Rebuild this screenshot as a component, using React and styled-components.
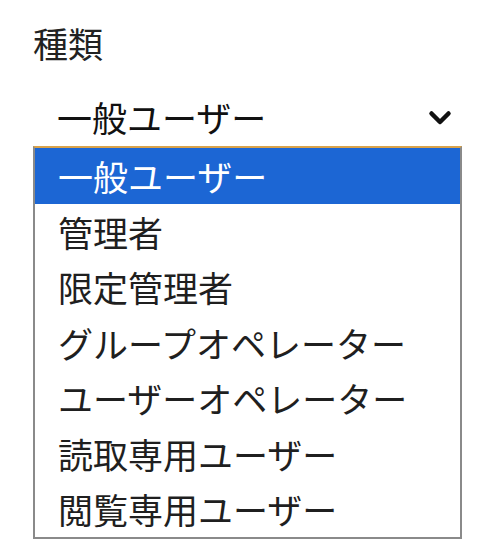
import React from 'react';
import styled, { createGlobalStyle } from 'styled-components';

const GlobalStyle = createGlobalStyle`
  html, body {
    margin: 0;
    padding: 0;
    background: #ffffff;
  }
  body {
    font-family: "Noto Sans CJK JP", "Noto Sans", sans-serif;
    color: #1f1f1f;
  }
`;

const options = [
  '一般ユーザー',
  '管理者',
  '限定管理者',
  'グループオペレーター',
  'ユーザーオペレーター',
  '読取専用ユーザー',
  '閲覧専用ユーザー',
];

export default function App() {
  const selected = 0;
  return (
    <>
      <GlobalStyle />
      <Page>
        <Label>種類</Label>
        <Field>
          <span>{options[selected]}</span>
          <svg width="24" height="18" viewBox="0 0 24 18">
            <path d="M3.5 4.5 L12 13 L20.5 4.5" fill="none" stroke="#111" strokeWidth="4.5" strokeLinecap="round" strokeLinejoin="round" />
          </svg>
        </Field>
        <List>
          {options.map((opt, i) => (
            <Option key={opt} active={i === selected}>{opt}</Option>
          ))}
        </List>
      </Page>
    </>
  );
}

const Page = styled.div`
  display: flex;
  flex-direction: column;
  width: 429px;
  padding: 19px 0 0 33px;
`;

const Label = styled.div`
  font-size: 35px;
  line-height: 48px;
  color: #222;
`;

const Field = styled.div`
  display: flex;
  align-items: center;
  justify-content: space-between;
  height: 60px;
  margin-top: 19px;
  padding: 0 10px 0 24px;
  font-size: 35px;
  color: #111;
  svg {
    display: block;
    margin-top: 4px;
  }
`;

const List = styled.div`
  display: flex;
  flex-direction: column;
  border: 2px solid #8a8a8a;
  border-top: 2px solid #d9a24a;
`;

const Option = styled.div`
  height: 55.5px;
  display: flex;
  align-items: center;
  padding-left: 23px;
  font-size: 35px;
  background: ${p => (p.active ? '#1c66d4' : '#ffffff')};
  color: ${p => (p.active ? '#ffffff' : '#1f1f1f')};
`;
